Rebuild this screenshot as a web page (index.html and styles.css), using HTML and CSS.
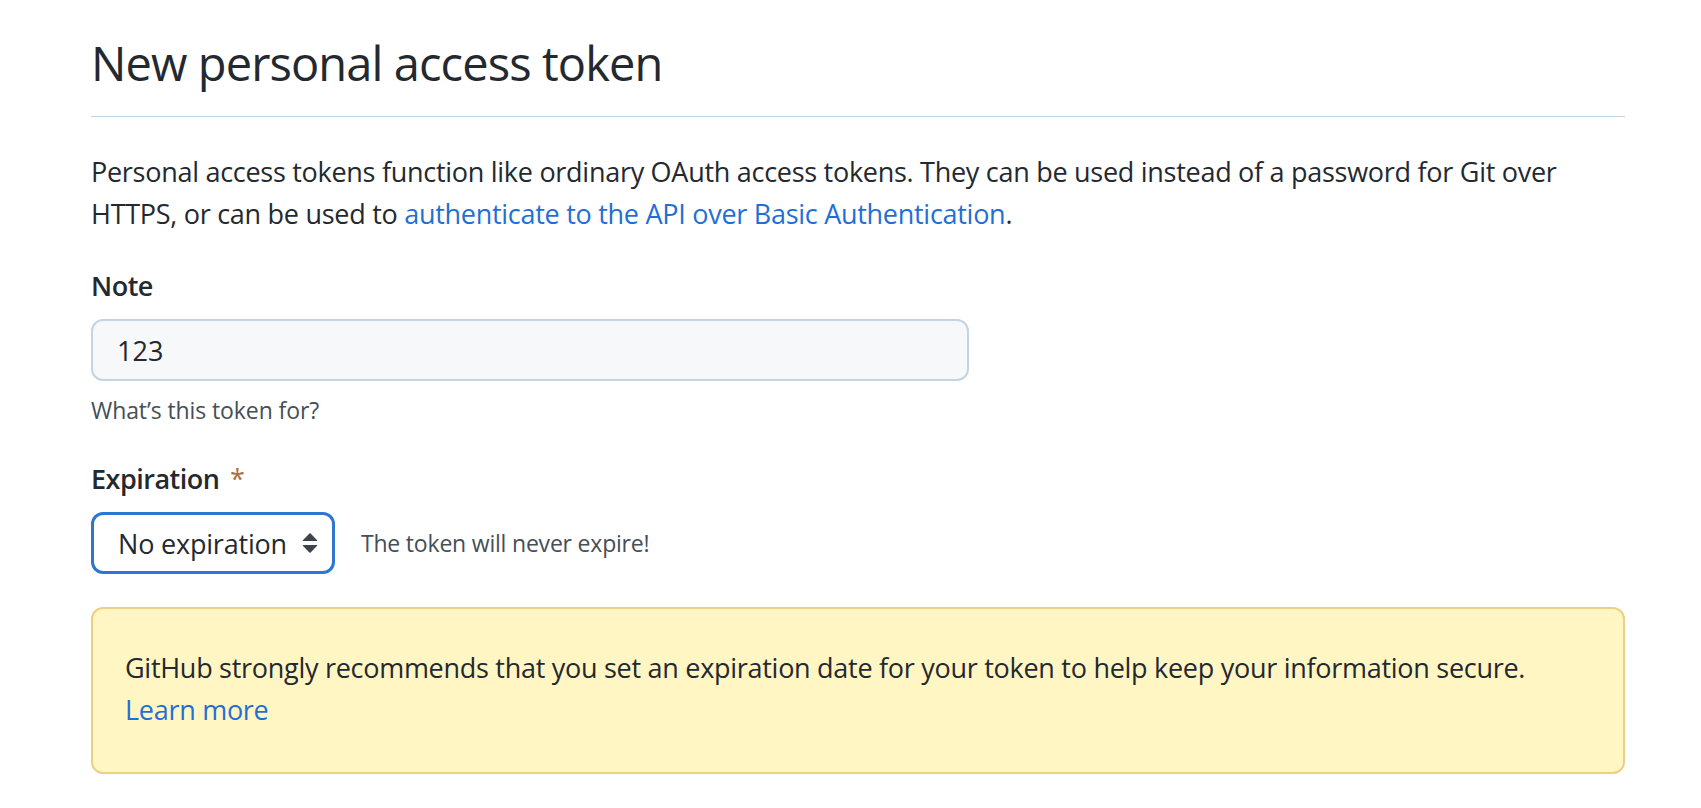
FILE: index.html
```html
<!DOCTYPE html>
<html lang="en">
<head>
<meta charset="utf-8">
<title>New personal access token</title>
<link rel="stylesheet" href="styles.css">
</head>
<body>
<div class="page">
  <div class="subhead">
    <h2 class="subhead-heading">New personal access token</h2>
  </div>
  <p class="intro">Personal access tokens function like ordinary OAuth access tokens. They can be used instead of a password for Git over HTTPS, or can be used to <a href="#" class="link">authenticate to the API over Basic Authentication</a>.</p>

  <div class="form-group">
    <label class="form-label" for="note">Note</label>
    <input class="form-input" id="note" type="text" value="123">
    <p class="note">What’s this token for?</p>
  </div>

  <div class="form-group">
    <label class="form-label">Expiration <span class="required">*</span></label>
    <div class="exp-row">
      <button class="select" type="button">
        <span>No expiration</span>
        <svg class="select-arrow" width="32" height="32" viewBox="0 0 16 16" aria-hidden="true"><path d="M4.427 9.427l3.396 3.396a.25.25 0 00.354 0l3.396-3.396A.25.25 0 0011.396 9H4.604a.25.25 0 00-.177.427zM4.427 6.573l3.396-3.396a.25.25 0 01.354 0l3.396 3.396A.25.25 0 0111.396 7H4.604a.25.25 0 01-.177-.427z"/></svg>
      </button>
      <span class="note inline-note">The token will never expire!</span>
    </div>
  </div>

  <div class="flash">
    GitHub strongly recommends that you set an expiration date for your token to help keep your information secure.<br>
    <a href="#" class="link">Learn more</a>
  </div>
</div>
</body>
</html>
```

FILE: styles.css
```css
* { box-sizing: border-box; }

html, body {
  margin: 0;
  background: #ffffff;
}

body {
  font-family: "Open Sans", "Noto Sans", "Liberation Sans", sans-serif;
  color: #24292f;
  font-size: 27px;
  line-height: 42px;
}

.page {
  width: 1534px;
  margin-left: 91px;
  padding-top: 27px;
}

.subhead {
  border-bottom: 1px solid #bfd3e3;
  padding-bottom: 17px;
  margin-bottom: 34px;
}

.subhead-heading {
  margin: 0;
  font-size: 47px;
  font-weight: 400;
  line-height: 72px;
  letter-spacing: -0.9px;
}

.intro {
  margin: 0;
  letter-spacing: -0.28px;
}

.link {
  color: #1f6fd6;
  text-decoration: none;
}

.form-group {
  margin: 30px 0;
}

.form-label {
  display: block;
  font-weight: 600;
  margin-bottom: 12px;
  letter-spacing: -0.5px;
}

.required {
  color: #a8703d;
  font-weight: 400;
  margin-left: 4px;
}

.form-input {
  display: block;
  width: 878px;
  height: 62px;
  padding: 0 24px;
  border: 2px solid #c4d4e0;
  border-radius: 12px;
  background: #f6f8fa;
  font-family: inherit;
  font-size: 27px;
  color: #24292f;
  outline: none;
}

.note {
  margin: 11px 0 4px;
  font-size: 23px;
  line-height: 36px;
  color: #464e57;
  letter-spacing: -0.1px;
}

.exp-row {
  display: flex;
  align-items: center;
  gap: 26px;
}

.inline-note {
  margin: 0;
  letter-spacing: -0.2px;
}

.select {
  display: flex;
  align-items: center;
  justify-content: space-between;
  width: 244px;
  height: 62px;
  padding: 0 6px 0 24px;
  border: 3px solid #2f76d2;
  border-radius: 12px;
  background: #ffffff;
  font-family: inherit;
  font-size: 27px;
  color: #24292f;
  letter-spacing: -0.2px;
  cursor: pointer;
}

.select-arrow {
  fill: #3d444d;
  flex: none;
}

.flash {
  margin-top: 33px;
  padding: 38px 32px 41px;
  border: 2px solid #ecd083;
  border-radius: 12px;
  background: #fff6c4;
  letter-spacing: -0.28px;
}
```
